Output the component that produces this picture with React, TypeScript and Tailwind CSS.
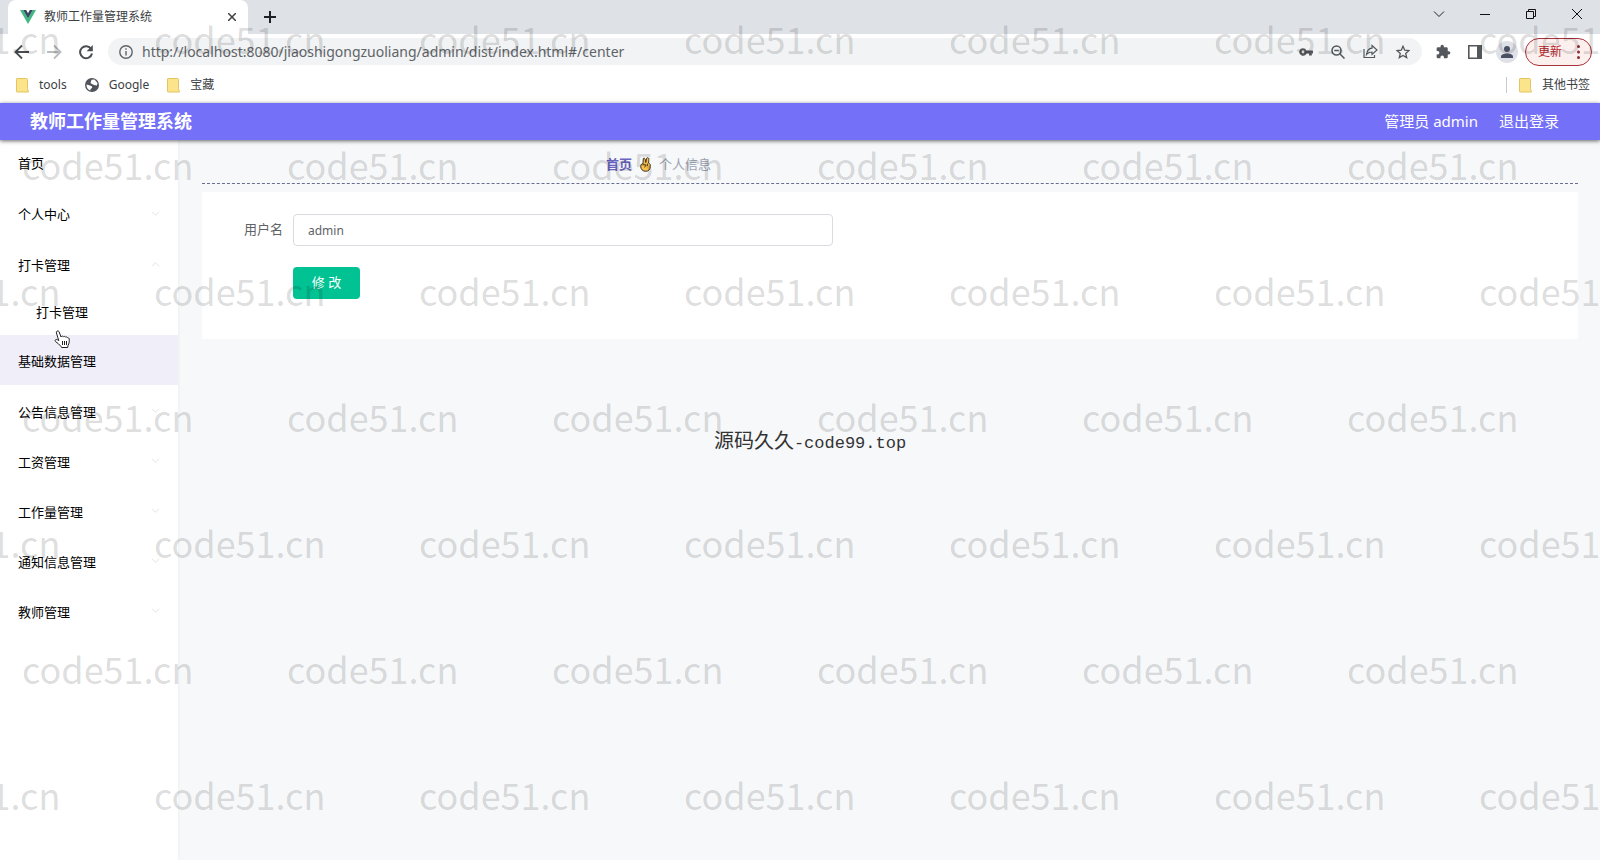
import React from "react";

const menuTop = [
  { label: "首页", arrow: "" },
  { label: "个人中心", arrow: "down" },
  { label: "打卡管理", arrow: "up" },
];

const menuRest = ["公告信息管理", "工资管理", "工作量管理", "通知信息管理", "教师管理"];

function Chevron({ up = false }: { up?: boolean }) {
  return (
    <svg className="mb-1 size-[9px] text-[#e0e1e4]" viewBox="0 0 10 10" fill="none" stroke="currentColor" aria-hidden="true">
      <path d={up ? "M1 7l4-4 4 4" : "M1 3l4 4 4-4"} />
    </svg>
  );
}

function Folder() {
  return (
    <svg className="h-[15px] w-[13px]" viewBox="0 0 13 15" aria-hidden="true">
      <path d="M1 .5h9.500a1 1 0 0 1 1 1v9l1 3.500H1a.5.5 0 0 1-.5-.5V1A.5.5 0 0 1 1 .5z" fill="#fbe48a" stroke="#e3c565" />
    </svg>
  );
}

function Bookmark({ label, children }: { label: string; children: React.ReactNode }) {
  return (
    <a href="#" className="flex items-center gap-2.5 text-[12px] text-[#3c4043]">
      {children}
      {label}
    </a>
  );
}

function IconButton({ label, children, className = "" }: { label: string; children: React.ReactNode; className?: string }) {
  return (
    <button type="button" aria-label={label} className={`flex items-center justify-center ${className}`}>
      {children}
    </button>
  );
}

function TabBar() {
  return (
    <div className="flex h-[34px] bg-[#dee1e6] pl-2">
      <div className="flex w-[240px] items-center rounded-t-lg bg-white pr-3 pl-3">
        <svg className="mr-2 h-[14px] w-4" viewBox="0 0 15 13" aria-hidden="true">
          <path d="M0 0h3l4.500 7.800L12 0h3L7.500 13z" fill="#41b883" />
          <path d="M3 0h2.800l1.700 3L9.200 0H12L7.500 7.800z" fill="#34495e" />
        </svg>
        <span className="flex-1 text-[12px] text-[#3c4043]">教师工作量管理系统</span>
        <IconButton label="关闭标签页">
          <svg className="size-2" viewBox="0 0 8 8" stroke="#3c4043" strokeWidth="1.500" aria-hidden="true">
            <path d="M0 0l8 8M8 0L0 8" />
          </svg>
        </IconButton>
      </div>
      <IconButton label="新标签页" className="ml-4">
        <svg className="size-3" viewBox="0 0 12 12" stroke="#202124" strokeWidth="2" aria-hidden="true">
          <path d="M6 0v12M0 6h12" />
        </svg>
      </IconButton>
      <div className="ml-auto flex h-7">
        <IconButton label="搜索标签页" className="w-[46px]">
          <svg className="h-3 w-3" viewBox="0 0 12 12" fill="none" stroke="#222" aria-hidden="true">
            <path d="M1 3.500l5 5 5-5" />
          </svg>
        </IconButton>
        <IconButton label="最小化" className="w-[46px]">
          <svg className="h-3 w-[10px]" viewBox="0 0 10 12" stroke="#111" aria-hidden="true">
            <path d="M0 6.500h10" />
          </svg>
        </IconButton>
        <IconButton label="还原" className="w-[46px]">
          <svg className="size-[10px]" viewBox="0 0 10 10" fill="none" stroke="#111" aria-hidden="true">
            <path d="M.5 2.500h7v7h-7zM2.500 2.500v-2h7v7h-2" />
          </svg>
        </IconButton>
        <IconButton label="关闭" className="w-[46px]">
          <svg className="size-[10px]" viewBox="0 0 10 10" stroke="#111" aria-hidden="true">
            <path d="M0 0l10 10M10 0L0 10" />
          </svg>
        </IconButton>
      </div>
    </div>
  );
}

function AddressBar() {
  return (
    <div className="flex h-[35px] items-center bg-white pr-2 pl-[14px]">
      <IconButton label="后退">
        <svg className="size-4" viewBox="0 0 16 16" fill="none" stroke="#4a4d51" strokeWidth="1.800" aria-hidden="true">
          <path d="M15 8H2M8 1.500L1.500 8 8 14.500" />
        </svg>
      </IconButton>
      <IconButton label="前进" className="ml-4">
        <svg className="size-4" viewBox="0 0 16 16" fill="none" stroke="#b9bbbe" strokeWidth="1.800" aria-hidden="true">
          <path d="M1 8h13M8 1.500L14.500 8 8 14.500" />
        </svg>
      </IconButton>
      <IconButton label="重新加载" className="ml-4">
        <svg className="size-4" viewBox="0 0 16 16" fill="none" aria-hidden="true">
          <path d="M13.200 5A6 6 0 1 0 14 9.500" stroke="#4a4d51" strokeWidth="2" />
          <path d="M14.800 1v6.200H8.600z" fill="#4a4d51" />
        </svg>
      </IconButton>
      <div className="ml-[14px] flex h-[27px] flex-1 items-center rounded-full bg-[#f1f3f4] pr-3 pl-[11px]">
        <svg className="mr-[9px] size-[14px]" viewBox="0 0 14 14" fill="none" stroke="#5f6368" strokeWidth="1.400" aria-hidden="true">
          <circle cx="7" cy="7" r="6.200" />
          <path d="M7 6v4.500M7 3.300v1.500" />
        </svg>
        <input
          aria-label="地址"
          readOnly
          value="http://localhost:8080/jiaoshigongzuoliang/admin/dist/index.html#/center"
          className="min-w-0 flex-1 bg-transparent text-[14px] text-[#5f6368] outline-none"
        />
        <div className="flex items-center gap-[18px] text-[#54575b]">
          <IconButton label="密码">
            <svg className="h-[14px] w-[14px]" viewBox="0 0 14 14" fill="currentColor" aria-hidden="true">
              <path fillRule="evenodd" d="M4 3.200a3.800 3.800 0 0 1 3.500 2.400H14v3h-1.200v2H10v-2H7.500A3.800 3.800 0 1 1 4 3.200zm0 2.400a1.400 1.400 0 1 0 0 2.800 1.400 1.400 0 0 0 0-2.800z" />
            </svg>
          </IconButton>
          <IconButton label="缩放">
            <svg className="size-[14px]" viewBox="0 0 14 14" fill="none" stroke="currentColor" strokeWidth="1.500" aria-hidden="true">
              <circle cx="5.500" cy="5.500" r="4.500" />
              <path d="M9 9l4.500 4.500M3.200 5.500h4.600" />
            </svg>
          </IconButton>
          <IconButton label="分享">
            <svg className="size-[15px]" viewBox="0 0 15 15" fill="none" stroke="currentColor" strokeWidth="1.200" aria-hidden="true">
              <path d="M1 5v8.500h10.500V11" />
              <path d="M9 1.500L14 6l-5 4.500V8C6.500 8 4.800 8.800 3.500 10.500 4 7 5.500 4.500 9 4.200z" />
            </svg>
          </IconButton>
          <IconButton label="收藏">
            <svg className="size-[14px]" viewBox="0 0 14 14" fill="none" stroke="currentColor" strokeWidth="1.300" aria-hidden="true">
              <path d="M7 1.200l1.700 4 4.300.4-3.300 2.800 1 4.200L7 10.400l-3.700 2.200 1-4.200L1 5.600l4.300-.4z" />
            </svg>
          </IconButton>
        </div>
      </div>
      <IconButton label="扩展程序" className="ml-[14px]">
        <svg className="size-[15px]" viewBox="1 0 23 23" fill="#54575b" aria-hidden="true">
          <path d="M20.500 11H19V7a2 2 0 0 0-2-2h-4V3.500a2.500 2.500 0 0 0-5 0V5H4a2 2 0 0 0-2 2v3.800h1.500a2.700 2.700 0 0 1 0 5.400H2V20a2 2 0 0 0 2 2h3.800v-1.500a2.700 2.700 0 0 1 5.400 0V22H17a2 2 0 0 0 2-2v-4h1.500a2.500 2.500 0 0 0 0-5z" />
        </svg>
      </IconButton>
      <IconButton label="侧边栏" className="ml-[17px]">
        <svg className="size-[14px]" viewBox="0 0 14 14" aria-hidden="true">
          <path d="M.8.8h12.400v12.400H.8z" fill="none" stroke="#54575b" strokeWidth="1.600" />
          <path d="M9 0h5v14H9z" fill="#54575b" />
        </svg>
      </IconButton>
      <IconButton label="用户" className="ml-[14px] size-[22px] rounded-full bg-[#dfe1e8]">
        <svg className="size-3" viewBox="0 0 12 12" fill="#4a5063" aria-hidden="true">
          <circle cx="6" cy="3" r="3" />
          <path d="M0 12v-1.500C0 8.500 3 7.500 6 7.500s6 1 6 3V12z" />
        </svg>
      </IconButton>
      <button type="button" className="ml-[7px] flex h-7 w-[67px] items-center justify-between rounded-full border border-[#a8323a] bg-[#fcf0ef] pr-[11px] pl-3 text-[12px] text-[#b3262b]">
        更新
        <svg className="h-[14px] w-[3px]" viewBox="0 0 3 14" fill="#8f2a2e" aria-hidden="true">
          <circle cx="1.500" cy="1.500" r="1.500" />
          <circle cx="1.500" cy="7" r="1.500" />
          <circle cx="1.500" cy="12.500" r="1.500" />
        </svg>
      </button>
    </div>
  );
}

function Bookmarks() {
  return (
    <div className="flex h-[34px] items-center gap-[18px] bg-white pr-[10px] pb-0.5 pl-4">
      <Bookmark label="tools"><Folder /></Bookmark>
      <Bookmark label="Google">
        <svg className="size-[14px]" viewBox="0 0 14 14" aria-hidden="true">
          <circle cx="7" cy="7" r="7" fill="#505357" />
          <path d="M1.500 6.500L5 7.500c2 .5 2.500 1 2 2.500l-1.500 1v1.500C3 12 1.300 9.500 1.500 6.500zM6.500 1.800L9.500 1.500l3 3.500-.5 2.500-3-.5-2-1-1.500-1z" fill="#fff" />
        </svg>
      </Bookmark>
      <Bookmark label="宝藏"><Folder /></Bookmark>
      <div className="ml-auto flex h-4 items-center border-l border-[#c8cacd] pl-3">
        <Bookmark label="其他书签"><Folder /></Bookmark>
      </div>
    </div>
  );
}

const wmRows = [0, 1, 2, 3, 4, 5, 6];
const wmCells = [0, 1, 2, 3, 4, 5, 6];

function Watermark() {
  return (
    <div aria-hidden="true" className="pointer-events-none absolute inset-0 z-20 overflow-hidden font-['Noto_Sans_CJK_SC',sans-serif] text-[36px] leading-[52px] font-normal text-black/15">
      <div className="flex flex-col pt-3">
        {wmRows.map((r) => (
          <div key={r} className={r % 2 ? "ml-[22px] flex h-[126px]" : "-ml-[111px] flex h-[126px]"}>
            {wmCells.map((c) => (
              <span key={c} className="w-[265px] shrink-0">code51.cn</span>
            ))}
          </div>
        ))}
      </div>
      <p className="absolute inset-x-0 top-[426px] pl-[20px] text-center text-[20px] leading-7 text-[#333]">
        源码久久<span className="font-['Liberation_Mono',monospace] text-[17px]">-code99.top</span>
      </p>
    </div>
  );
}

function HandCursor() {
  return (
    <svg className="pointer-events-none absolute -top-[5px] left-[54px] z-30 h-[19px] w-[17px]" viewBox="0 0 17 19" aria-hidden="true">
      <path
        d="M3 1.200c1-.6 1.900 0 2.200.8L7 7l.6-.6c.6-.5 1.500-.3 1.900.4.600-.6 1.600-.5 2 .3.700-.5 1.700-.2 2 .6.900-.1 1.600.5 1.700 1.300.2 2 .1 4.500-1.200 6.500l-.3 2H7.500l-.6-1.200C5.500 14.500 3.600 13 1.600 11.600c-.9-.8-.5-2 .6-2.100 1-.1 1.800.6 2.600 1.200L2.400 2.900c-.2-.7 0-1.400.6-1.700z"
        fill="#fff"
        stroke="#222"
      />
      <path d="M8.500 11v4M10.500 11v4M12.500 11v4" stroke="#222" />
    </svg>
  );
}

function VictoryHand() {
  return (
    <svg className="mx-2 h-[15px] w-[11px]" viewBox="0 0 11 15" aria-hidden="true">
      <path
        d="M3.300 1.500c.8-.6 1.600-.2 1.800.7L5.800 5.500l.7-4c.2-1 2-1.100 2.300.1.200 1-.2 3-.2 4.500 1.400.5 1.700 1.500 1.700 3 0 3-1.500 5.200-4.600 5.200C2.500 14.300.8 12 .7 9.500.7 8 1.300 7 3 6.700z"
        fill="#f8c04a"
        stroke="#3b2f1c"
      />
      <path d="M3 7.500l3 .5-1.500 2.500M7.500 6.500v2.500" fill="none" stroke="#3b2f1c" strokeWidth=".8" />
    </svg>
  );
}

export default function App() {
  return (
    <div className="relative flex min-h-screen flex-col overflow-hidden bg-[#f7f8fa] font-['Noto_Sans','Noto_Sans_CJK_SC',sans-serif]">
      <TabBar />
      <AddressBar />
      <Bookmarks />
      <header className="z-10 flex h-[37px] items-center bg-[#7470f8] pr-[41px] pl-[30px] text-white shadow-[0_1px_4px_rgba(0,0,0,0.6)]">
        <h1 className="text-[18px] font-bold">教师工作量管理系统</h1>
        <span className="ml-auto text-[15px]">管理员 admin</span>
        <button type="button" className="ml-[21px] text-[15px]">退出登录</button>
      </header>
      <div className="flex flex-1">
        <nav className="w-[178px] bg-white text-[13px] text-black shadow-[0_0_4px_rgba(0,0,0,0.06)]">
          {menuTop.map((m) => (
            <a key={m.label} href="#" className="flex h-[51px] items-center justify-between px-[18px] pb-[3px]">
              {m.label}
              {m.arrow && <Chevron up={m.arrow === "up"} />}
            </a>
          ))}
          <a href="#" className="flex h-[42px] items-center pb-0.5 pl-9">打卡管理</a>
          <a href="#" className="relative flex h-[50px] items-center bg-[#f0eef9] pt-[3px] pl-[18px]">
            基础数据管理
            <HandCursor />
          </a>
          {menuRest.map((m) => (
            <a key={m} href="#" className="flex h-[50px] items-center justify-between px-[18px] pt-[5px]">
              {m}
              <Chevron />
            </a>
          ))}
        </nav>
        <main className="flex-1 pr-[22px] pl-6">
          <div className="flex h-11 items-center border-b border-dashed border-[#6a6f8f] pt-[6px] pl-[404px] text-[13px]">
            <a href="#" className="font-bold text-[#6a64c0]">首页</a>
            <VictoryHand />
            <span className="text-[#9aa3b2]">个人信息</span>
          </div>
          <form className="mt-2 h-[147px] bg-white pt-[22px] pl-[42px] text-[13px] text-[#606266]">
            <div className="flex items-center">
              <label htmlFor="username" className="w-[49px]">用户名</label>
              <input id="username" defaultValue="admin" className="h-8 w-[540px] rounded border border-[#d9dbe0] px-[14px] text-[12px]" />
            </div>
            <button type="button" className="mt-[21px] ml-[49px] h-8 w-[67px] rounded bg-[#00c292] text-white">修 改</button>
          </form>
        </main>
      </div>
      <Watermark />
    </div>
  );
}
